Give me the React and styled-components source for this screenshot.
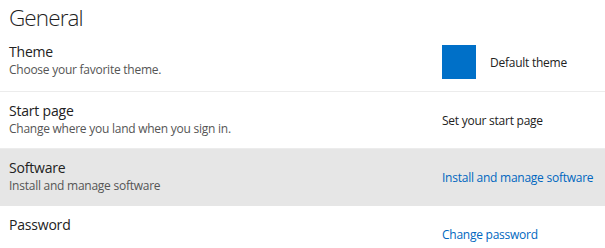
import React from 'react';
import styled, { createGlobalStyle } from 'styled-components';

const GlobalStyle = createGlobalStyle`
  html, body {
    margin: 0;
    padding: 0;
    background: #fff;
  }
  body {
    font-family: 'Open Sans', 'Noto Sans', Arial, sans-serif;
    color: #262626;
  }
`;

const Page = styled.div`
  width: 605px;
  height: 248px;
  overflow: hidden;
`;

const Heading = styled.h1`
  margin: 0;
  padding: 3px 9px 0;
  font-size: 22.5px;
  font-weight: 300;
  line-height: 30px;
  letter-spacing: -0.9px;
  color: #1f1f1f;
`;

const Row = styled.div`
  display: grid;
  grid-template-columns: 433px 1fr;
  align-items: center;
  height: ${(p) => p.height}px;
  padding-left: 9px;
  box-sizing: border-box;
  background: ${(p) => (p.active ? '#e6e6e6' : '#fff')};
  border-bottom: 1px solid ${(p) => (p.active ? '#e6e6e6' : '#ececec')};
`;

const Info = styled.div`
  display: flex;
  flex-direction: column;
  align-self: start;
  padding-top: 10px;
`;

const Title = styled.div`
  font-size: 14px;
  line-height: 18px;
  letter-spacing: -0.2px;
  color: #222;
`;

const Desc = styled.div`
  font-size: 12px;
  line-height: 18px;
  letter-spacing: -0.25px;
  color: #555;
`;

const Value = styled.div`
  display: flex;
  align-items: center;
  gap: 14px;
  white-space: nowrap;
  font-size: 12px;
  letter-spacing: -0.25px;
  color: ${(p) => (p.link ? '#0067c0' : '#222')};
`;

const Swatch = styled.div`
  width: 34px;
  height: 34px;
  background: #0070c8;
`;

const rows = [
  { title: 'Theme', desc: 'Choose your favorite theme.', value: 'Default theme', swatch: true, height: 59 },
  { title: 'Start page', desc: 'Change where you land when you sign in.', value: 'Set your start page', height: 57 },
  { title: 'Software', desc: 'Install and manage software', value: 'Install and manage software', link: true, active: true, height: 57 },
  { title: 'Password', desc: '', value: 'Change password', link: true, height: 57 },
];

export default function App() {
  return (
    <Page>
      <GlobalStyle />
      <Heading>General</Heading>
      {rows.map((r) => (
        <Row key={r.title} height={r.height} active={r.active}>
          <Info>
            <Title>{r.title}</Title>
            {r.desc && <Desc>{r.desc}</Desc>}
          </Info>
          <Value link={r.link}>
            {r.swatch && <Swatch />}
            {r.value}
          </Value>
        </Row>
      ))}
    </Page>
  );
}
